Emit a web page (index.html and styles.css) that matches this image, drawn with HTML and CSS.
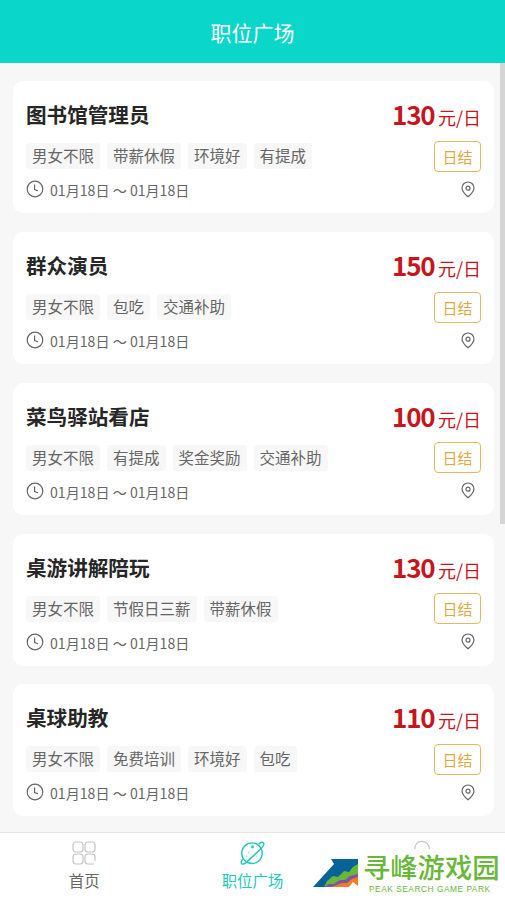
FILE: index.html
```
<!DOCTYPE html>
<html lang="zh-CN">
<head>
<meta charset="utf-8">
<title>职位广场</title>
<link rel="stylesheet" href="styles.css">
</head>
<body>
<svg class="defs" width="0" height="0">
  <symbol id="clock" viewBox="0 0 18 18"><circle cx="9" cy="9" r="7.8"/><path d="M8.6 4.4v5.1l3.4 1.2"/></symbol>
  <symbol id="pin" viewBox="0 0 14 17"><path d="M7 15.8C4.6 13.8 1 10.5 1 7a6 6 0 0 1 12 0c0 3.5-3.6 6.8-6 8.8z"/><circle cx="7" cy="7.2" r="2"/></symbol>
</svg>
<div class="app">
  <header class="header">职位广场</header>
  <main class="list">
    <article class="card">
      <div class="top"><h2>图书馆管理员</h2><div class="pay"><b>130</b>元/日</div></div>
      <div class="middle"><div class="tags"><span>男女不限</span><span>带薪休假</span><span>环境好</span><span>有提成</span></div><div class="settle">日结</div></div>
      <div class="bottom"><svg class="clock"><use href="#clock"/></svg><time>01月18日 ～ 01月18日</time><svg class="pin"><use href="#pin"/></svg></div>
    </article>
    <article class="card">
      <div class="top"><h2>群众演员</h2><div class="pay"><b>150</b>元/日</div></div>
      <div class="middle"><div class="tags"><span>男女不限</span><span>包吃</span><span>交通补助</span></div><div class="settle">日结</div></div>
      <div class="bottom"><svg class="clock"><use href="#clock"/></svg><time>01月18日 ～ 01月18日</time><svg class="pin"><use href="#pin"/></svg></div>
    </article>
    <article class="card">
      <div class="top"><h2>菜鸟驿站看店</h2><div class="pay"><b>100</b>元/日</div></div>
      <div class="middle"><div class="tags"><span>男女不限</span><span>有提成</span><span>奖金奖励</span><span>交通补助</span></div><div class="settle">日结</div></div>
      <div class="bottom"><svg class="clock"><use href="#clock"/></svg><time>01月18日 ～ 01月18日</time><svg class="pin"><use href="#pin"/></svg></div>
    </article>
    <article class="card">
      <div class="top"><h2>桌游讲解陪玩</h2><div class="pay"><b>130</b>元/日</div></div>
      <div class="middle"><div class="tags"><span>男女不限</span><span>节假日三薪</span><span>带薪休假</span></div><div class="settle">日结</div></div>
      <div class="bottom"><svg class="clock"><use href="#clock"/></svg><time>01月18日 ～ 01月18日</time><svg class="pin"><use href="#pin"/></svg></div>
    </article>
    <article class="card">
      <div class="top"><h2>桌球助教</h2><div class="pay"><b>110</b>元/日</div></div>
      <div class="middle"><div class="tags"><span>男女不限</span><span>免费培训</span><span>环境好</span><span>包吃</span></div><div class="settle">日结</div></div>
      <div class="bottom"><svg class="clock"><use href="#clock"/></svg><time>01月18日 ～ 01月18日</time><svg class="pin"><use href="#pin"/></svg></div>
    </article>
    <div class="scrollbar"></div>
  </main>
  <nav class="tabbar">
    <div class="tab">
      <svg class="icon" viewBox="0 0 26 26"><rect x="2" y="2" width="10" height="10" rx="3"/><rect x="14" y="2" width="10" height="10" rx="3"/><rect x="2" y="14" width="10" height="10" rx="3"/><path d="M24 21v-4a3 3 0 0 0-3-3h-4a3 3 0 0 0-3 3v4a3 3 0 0 0 3 3h6"/></svg>
      <span>首页</span>
    </div>
    <div class="tab active">
      <svg class="icon" viewBox="0 0 26 26"><circle cx="13" cy="13.2" r="10.3"/><path d="M19.5 4.2c1.8-1.6 4-2.2 4.8-1.5.9.9.4 3-1.6 5.2L7.2 22.6c-1.8 1.4-3.7 1.8-4.5 1.1-.9-.8-.5-2.9 1.2-4.8"/><circle class="dot" cx="13.6" cy="7" r="1.4"/><path class="faint" d="m9 12 1 1m-3 3 1 1m9-1 1 1"/></svg>
      <span>职位广场</span>
    </div>
    <div class="tab mine">
      <svg class="icon" viewBox="0 0 26 26"><path d="M6.8 9.5V8.5a7.2 7.2 0 0 1 14.4 0v1"/></svg>
    </div>
    <div class="brand">
      <svg class="peak" viewBox="0 0 46 30"><path fill="#096298" d="M18 1h27v20L18 29H0L21 6z"/><path fill="#69b739" d="m11 29 3-6 6-5 5 1 6-6 5 1 4-5 5-3v12L20 29z"/><path fill="#8751a3" d="m11 29 5-3 5 0 6-4 5 0 5-4 8-2v6L25 29z"/><path fill="#f47b23" d="m18 29 6-2 5-2 5 0 5-4 6-2v9l-5-4-4 5z"/></svg>
      <div class="brand-text"><strong>寻峰游戏园</strong><small>PEAK SEARCH GAME PARK</small></div>
    </div>
  </nav>
</div>
</body>
</html>
```
FILE: styles.css
```
* { box-sizing: border-box; }
body { margin: 0; font-family: "Noto Sans CJK SC", sans-serif; }
svg { fill: none; flex: none; display: block; }
.defs { position: absolute; }
.app { width: 505px; height: 899px; display: flex; flex-direction: column; overflow: hidden; background: #f7f7f7; }
.header { height: 62.5px; flex: none; padding-top: 3px; background: #0bd6ca; color: #fff; font-size: 21px; line-height: 58px; text-align: center; }
.list { position: relative; flex: 1; min-height: 0; padding: 18.8px 11px 0 13px; display: flex; flex-direction: column; gap: 18.8px; overflow: hidden; }
.card { height: 132px; flex: none; padding: 17px 13px 0; border-radius: 10px; background: #fff; }
.top { height: 42px; display: flex; justify-content: space-between; }
.top h2 { margin: 0; font-size: 20.6px; line-height: 32px; font-weight: 700; color: #262626; }
.pay { display: flex; align-items: baseline; gap: 3.5px; height: 36px; margin-top: -1px; font-size: 18px; line-height: 34px; color: #c5161d; }
.pay b { font-size: 26px; font-weight: 700; letter-spacing: -1.2px; }
.middle { height: 32px; display: flex; align-items: center; justify-content: space-between; }
.tags { display: flex; gap: 7px; }
.tags span { height: 26px; padding: 0 6px; border-radius: 3px; background: #f7f7f7; color: #666; font-size: 15.5px; line-height: 25px; }
.settle { width: 47px; height: 31px; border: 1.4px solid #e5b75f; border-radius: 4px; color: #dfa941; font-size: 15px; line-height: 29px; text-align: center; }
.bottom { height: 34px; display: flex; align-items: center; stroke: #666; stroke-width: 1.2; color: #666; }
.clock { width: 18px; height: 18px; }
.bottom time { margin: 2px auto 0 6px; stroke: none; font-size: 14.1px; line-height: 22px; white-space: pre; }
.pin { width: 14px; height: 17px; margin-right: 6px; }
.scrollbar { position: absolute; top: 0; right: 0; width: 5px; height: 461px; background: #d5d5d5; }
.tabbar { position: relative; height: 67.5px; flex: none; display: flex; border-top: 1px solid #e5e5e5; background: #fff; }
.tab { flex: 1; padding-top: 7px; display: flex; flex-direction: column; align-items: center; color: #666; font-size: 15.4px; line-height: 28px; }
.icon { width: 26px; height: 26px; stroke: #c5c5c5; stroke-width: 1.2; }
.active { color: #20c9b7; }
.active .icon { stroke: #20c9b7; stroke-width: 1.4; }
.icon .dot { fill: #20c9b7; stroke: none; }
.icon .faint { opacity: .45; }
.brand { position: absolute; left: 313px; top: 18px; display: flex; gap: 4px; }
.peak { width: 46px; height: 30px; margin-top: 7px; }
.brand-text { display: flex; flex-direction: column; color: #69b739; white-space: nowrap; }
.brand strong { font-size: 27.3px; line-height: 31px; font-weight: 500; }
.brand small { margin: 2px 0 0 6px; font: 8.4px/10px "Liberation Sans", sans-serif; letter-spacing: .5px; }
```
